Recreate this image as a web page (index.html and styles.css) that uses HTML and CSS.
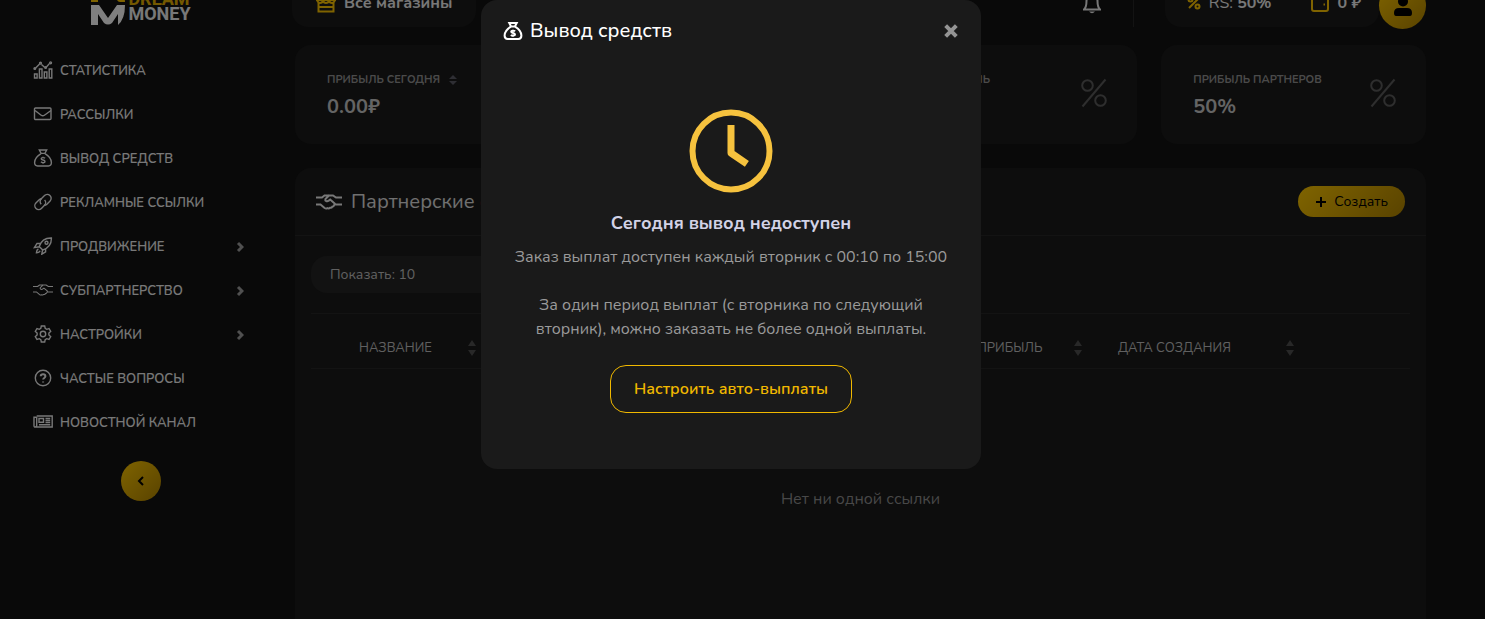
FILE: index.html
```html
<!DOCTYPE html>
<html lang="ru">
<head>
    <meta charset="UTF-8">
    <meta name="viewport" content="width=device-width, initial-scale=1.0">
    <title>Dream Money</title>
    <link rel="stylesheet" href="styles.css">
</head>
<body>

    <svg class="sprite" aria-hidden="true">
        <symbol id="i-stats" viewBox="0 0 20 18">
            <path d="M1.5 13h2.600v4H1.500zM6.400 8h2.600v9H6.400zM11.300 11h2.600v6h-2.600zM16.200 8h2.600v9h-2.600zM2.600 7l4-4M8.500 3.400l3.300 3M13.400 6l3.200-3.600" />
            <circle cx="1.800" cy="7.600" r=".8" /><circle cx="7.500" cy="2.200" r=".9" /><circle cx="12.600" cy="6.600" r=".8" /><circle cx="17.600" cy="1.800" r=".9" />
        </symbol>
        <symbol id="i-mail" viewBox="0 0 20 18">
            <rect x="1.500" y="3" width="16.500" height="11.500" rx="1" />
            <path d="M2 5.500l6.200 4.700q1.600 1.200 3.200 0L18 5.500" />
        </symbol>
        <symbol id="i-bag" viewBox="0 0 20 18">
            <path d="M6.300 1h7.400l-1.800 3.400H8.100zM8 4.600C4 7 1.600 10.400 1.600 13.600c0 2.300 1.200 3.400 3 3.400h10.800c1.800 0 3-1.100 3-3.400 0-3.200-2.400-6.600-6.400-9" />
            <path d="M12 9.300c-.7-.9-3.800-1-3.800.5 0 1.600 3.800.9 3.800 2.600 0 1.600-3.100 1.500-4 .4M10 7.700v1M10 13.500v1.200" />
        </symbol>
        <symbol id="i-link" viewBox="0 0 20 18">
            <path d="M8.200 11.200a3.800 3.800 0 0 1 .1-5.400l3.200-3.200a3.800 3.800 0 0 1 5.600 5.300l-3.200 3.300a3.800 3.800 0 0 1-3 1.100" />
            <path d="M11.600 6.900a3.800 3.800 0 0 1-.1 5.300l-3.100 3.200a3.800 3.800 0 0 1-5.500-5.300l3.300-3.300a3.800 3.800 0 0 1 2.600-1.100" />
        </symbol>
        <symbol id="i-rocket" viewBox="0 0 20 18">
            <path d="M6.200 9.500C8 4 12 .8 18.400 1c.2 6.300-3.200 10.200-8.600 12zM7.400 6.500H4L1.400 10.600l4.800-.8M12.600 11.700v3.200L8.800 17.200l.8-4.300M6.200 9.500l3.500 3.500M5.400 12c-1.400.6-1.900 2-2 3.700 1.800 0 3.200-.6 3.700-2" />
            <circle cx="13.500" cy="5.700" r="1.500" />
        </symbol>
        <symbol id="i-hands" viewBox="0 0 26 18">
            <path d="M0 4.500h6L8.500 2.500h4M0 11.500h4.500l4.100 3.500q1.400 1 2.800.2 1.500.7 2.600-.4 1.600.3 2.300-1.100 1.600-.1 2.200-2.200H26M26 4.500h-6L17 2.500h-4L9.400 6c-.7 2 1.700 3 3.400 1.600l1.400-1 5 4.300" />
        </symbol>
        <symbol id="i-gear" viewBox="0 0 20 18">
            <path d="M8.300 1h3.400l.5 2.400 1.500.9 2.300-.8 1.700 2.900-1.800 1.700v1.800l1.800 1.700-1.700 2.900-2.300-.8-1.500.9-.5 2.400H8.300l-.5-2.400-1.500-.9-2.300.8-1.700-2.900 1.800-1.700V8.100L2.300 6.400 4 3.500l2.300.8 1.500-.9z" />
            <circle cx="10" cy="9" r="2.700" />
        </symbol>
        <symbol id="i-help" viewBox="0 0 20 18">
            <circle cx="10" cy="9" r="7.700" />
            <path class="heavy" d="M7.700 7.200c.2-2.700 4.700-2.500 4.700.1 0 1.700-2.300 1.600-2.300 3.300M10.100 12.400v1.200" />
        </symbol>
        <symbol id="i-news" viewBox="0 0 20 18">
            <path d="M3.700 3h15.500v11H2.200Q1 14 1 12.800V4.300h2.700M3.700 4v8.500q0 1.500-1.500 1.500M6 5.500h4.500v3.800H6zM12.500 5.500h4.700M12.500 7.500h4.700M12.500 9.500h4.700M6 11.700h11.200" />
        </symbol>
        <symbol id="i-percent" viewBox="0 0 26 30">
            <circle cx="6.500" cy="7.500" r="5.300" /><circle cx="19.500" cy="22.500" r="5.300" />
            <path d="M24.500 1.500L1.500 28.500" />
        </symbol>
    </svg>

    <div class="page">
        <nav class="sidebar">
            <a class="logo" href="#">
                <svg class="logo-mark" viewBox="0 0 34 34" aria-hidden="true">
                    <path class="gold" d="M0 0h22q12 2 12 11h-5q-3 0-4-5H7v5H0z" />
                    <path class="white" d="M0 14h8l9 13 9-13h8q0 14-7 20V23l-6 9q-4 3-8 0l-6-9v11H0z" />
                </svg>
                <span class="logo-text"><span class="gold">DREAM</span><span>MONEY</span></span>
            </a>
            <ul class="menu">
                <li><a href="#"><svg class="icon"><use href="#i-stats" /></svg>Статистика</a></li>
                <li><a href="#"><svg class="icon"><use href="#i-mail" /></svg>Рассылки</a></li>
                <li><a href="#"><svg class="icon"><use href="#i-bag" /></svg>Вывод средств</a></li>
                <li><a href="#"><svg class="icon"><use href="#i-link" /></svg>Рекламные ссылки</a></li>
                <li><a href="#"><svg class="icon"><use href="#i-rocket" /></svg>Продвижение<svg class="arrow" viewBox="0 0 8 12"><path d="M2 2l4 4-4 4" /></svg></a></li>
                <li><a href="#"><svg class="icon"><use href="#i-hands" /></svg>Субпартнерство<svg class="arrow" viewBox="0 0 8 12"><path d="M2 2l4 4-4 4" /></svg></a></li>
                <li><a href="#"><svg class="icon"><use href="#i-gear" /></svg>Настройки<svg class="arrow" viewBox="0 0 8 12"><path d="M2 2l4 4-4 4" /></svg></a></li>
                <li><a href="#"><svg class="icon"><use href="#i-help" /></svg>Частые вопросы</a></li>
                <li><a href="#"><svg class="icon"><use href="#i-news" /></svg>Новостной канал</a></li>
            </ul>
            <button class="collapse" type="button" aria-label="Свернуть меню">
                <svg viewBox="0 0 8 12"><path d="M6 2L2 6l4 4" /></svg>
            </button>
        </nav>

        <main class="main">
            <header class="topbar">
                <button class="shops" type="button">
                    <svg viewBox="0 0 20 20"><path d="M3 1h14l2 6H1zM2.500 10v8.500h15V10M2.500 14h15M1 7q1 3 3 3t3-2q1 2 3 2t3-2q1 2 3 2t3-3" /></svg>
                    Все магазины
                </button>
                <button class="bell" type="button" aria-label="Уведомления">
                    <svg viewBox="0 0 18 22"><path d="M1 17.500h16c-2-2-2.500-4-2.500-8.500a5.500 5.500 0 0 0-11 0c0 4.500-.5 6.500-2.500 8.500z" /><path class="clapper" d="M6 19.500h6q-3 3.500-6 0z" /></svg>
                </button>
                <div class="balance">
                    <svg class="rate" viewBox="0 0 14 14"><circle cx="3.500" cy="3.500" r="2" /><circle cx="10.500" cy="10.500" r="2" /><path d="M12 2L2 12" /></svg>
                    <span>RS: <b>50%</b></span>
                    <svg class="wallet" viewBox="0 0 18 18"><path d="M14 4V1H3Q1 1 1 3v12q0 2 2 2h12q2 0 2-2V6q0-2-2-2H3M12.500 10.500h1.500" /></svg>
                    <b>0 ₽</b>
                </div>
                <button class="avatar" type="button" aria-label="Профиль">
                    <svg viewBox="0 0 18 20"><circle cx="9" cy="5.500" r="5" /><path d="M5 12h8q5 0 5 5 0 3-2 3H2q-2 0-2-3 0-5 5-5z" /></svg>
                </button>
            </header>

            <section class="cards">
                <div class="card">
                    <div>
                        <h3>Прибыль сегодня <svg class="updown" viewBox="0 0 8 10"><path d="M0 4l4-4 4 4zM0 6h8l-4 4z" /></svg></h3>
                        <p>0.00₽</p>
                    </div>
                </div>
                <div class="card"></div>
                <div class="card">
                    <div>
                        <h3>Моя прибыль</h3>
                    </div>
                    <svg class="percent"><use href="#i-percent" /></svg>
                </div>
                <div class="card">
                    <div>
                        <h3>Прибыль партнеров</h3>
                        <p>50%</p>
                    </div>
                    <svg class="percent"><use href="#i-percent" /></svg>
                </div>
            </section>

            <section class="panel">
                <div class="panel-head">
                    <svg class="icon"><use href="#i-hands" /></svg>
                    <h2>Партнерские <span class="accent">ссылки</span></h2>
                    <button class="create" type="button">
                        <svg viewBox="0 0 12 12"><path d="M6 1v10M1 6h10" /></svg>Создать
                    </button>
                </div>
                <div class="panel-body">
                    <select class="limit" aria-label="Показать">
                        <option>Показать: 10</option>
                    </select>
                    <table>
                        <thead>
                            <tr>
                                <th class="col-name"><span>Название <svg class="sort" viewBox="0 0 8 16"><path d="M0 6l4-6 4 6zM0 10h8l-4 6z" /></svg></span></th>
                                <td></td>
                                <th class="col-profit"><span>Прибыль <svg class="sort" viewBox="0 0 8 16"><path d="M0 6l4-6 4 6zM0 10h8l-4 6z" /></svg></span></th>
                                <th class="col-date"><span>Дата создания <svg class="sort" viewBox="0 0 8 16"><path d="M0 6l4-6 4 6zM0 10h8l-4 6z" /></svg></span></th>
                                <td class="col-actions"></td>
                            </tr>
                        </thead>
                        <tbody>
                            <tr>
                                <td class="empty" colspan="5">Нет ни одной ссылки</td>
                            </tr>
                        </tbody>
                    </table>
                </div>
            </section>
        </main>
    </div>

    <div class="overlay">
        <div class="modal" role="dialog" aria-modal="true" aria-labelledby="modal-title">
            <div class="modal-head">
                <svg class="icon"><use href="#i-bag" /></svg>
                <h2 id="modal-title">Вывод средств</h2>
                <button class="close" type="button" aria-label="Закрыть">
                    <svg viewBox="0 0 12 12"><path d="M2 2l8 8M10 2l-8 8" /></svg>
                </button>
            </div>
            <div class="modal-body">
                <svg class="clock" viewBox="0 0 84 84" aria-hidden="true">
                    <circle cx="42" cy="42" r="38.500" />
                    <path class="hands" d="M42 19.500v24.500l13 9" />
                </svg>
                <h3>Сегодня вывод недоступен</h3>
                <p>Заказ выплат доступен каждый вторник с 00:10 по 15:00</p>
                <p class="note">За один период выплат (с вторника по следующий вторник), можно заказать не более одной выплаты.</p>
                <a class="auto" href="#">Настроить авто-выплаты</a>
            </div>
        </div>
    </div>

</body>
</html>
```

FILE: styles.css
```css
* {
    box-sizing: border-box;
}

body {
    margin: 0;
    background-color: #121212;
    color: #f0f0f0;
    font-family: Nunito, Lato, "Noto Sans", sans-serif;
    font-size: 16px;
    line-height: 24px;
    overflow: hidden;
}

h2, h3, p, ul {
    margin: 0;
    padding: 0;
}

a {
    color: inherit;
    text-decoration: none;
}

button {
    font: inherit;
    color: inherit;
    background: none;
    border: none;
    padding: 0;
    cursor: pointer;
}

svg {
    fill: none;
    stroke: currentColor;
    flex: none;
}

.sprite {
    display: none;
}

.heavy {
    stroke-width: 2;
}

.page {
    display: flex;
    height: 100vh;
    padding-right: 23px;
    overflow: hidden;
}

/* sidebar */

.sidebar {
    width: 282px;
    flex: none;
    display: flex;
    flex-direction: column;
    align-items: center;
}

.logo {
    display: flex;
    align-items: flex-end;
    justify-content: center;
    gap: 3px;
    height: 25px;
    margin-bottom: 24px;
    font-family: Roboto, sans-serif;
    font-weight: 700;
    font-size: 18px;
}

.logo-mark {
    width: 34px;
    height: 34px;
    stroke: none;
}

.logo-mark .gold {
    fill: #ffc600;
}

.logo-mark .white {
    fill: #ffffff;
}

.logo-text {
    display: flex;
    flex-direction: column;
    line-height: 15px;
    padding-bottom: 4px;
}

.logo-text .gold {
    color: #e6b000;
}

.menu {
    width: 100%;
    list-style: none;
    margin-bottom: 16px;
}

.menu a {
    display: flex;
    align-items: center;
    gap: 7px;
    height: 44px;
    padding: 0 38px 0 33px;
    font-size: 13px;
    font-weight: 600;
    text-transform: uppercase;
}

.menu .icon {
    width: 20px;
    height: 18px;
    margin-bottom: 2px;
    overflow: visible;
    stroke-width: 1.4;
}

.menu .arrow {
    width: 8px;
    height: 12px;
    margin-left: auto;
    stroke: #a0a0a0;
    stroke-width: 3;
}

.collapse,
.avatar {
    display: flex;
    align-items: center;
    justify-content: center;
    border-radius: 50%;
    background: linear-gradient(135deg, #ffc800, #b38600);
    color: #000000;
}

.collapse {
    width: 40px;
    height: 40px;
}

.collapse svg {
    width: 8px;
    height: 12px;
    stroke-width: 2;
}

/* main column */

.main {
    flex: 1;
    min-width: 0;
    padding: 0 36px 0 13px;
}

.topbar {
    display: flex;
    align-items: flex-end;
    height: 27px;
    margin-left: -3px;
    margin-bottom: 18px;
}

.shops {
    display: flex;
    align-items: center;
    gap: 8px;
    height: 48px;
    padding: 0 24px;
    border-radius: 16px;
    background-color: #1a1a1a;
    font-weight: 700;
}

.shops svg {
    width: 20px;
    height: 20px;
    color: #ffc600;
    stroke-width: 2;
}

.bell {
    display: flex;
    align-items: center;
    height: 48px;
    margin-left: auto;
    padding: 0 32px;
    border-right: 1px solid #262626;
}

.bell svg {
    width: 18px;
    height: 22px;
    stroke-width: 2;
}

.bell .clapper {
    fill: currentColor;
    stroke: none;
}

.balance {
    display: flex;
    align-items: center;
    gap: 8px;
    height: 48px;
    margin-left: 31px;
    padding: 0 18px 0 22px;
    border-radius: 16px;
    background-color: #1a1a1a;
}

.balance svg {
    color: #ffc600;
    stroke-width: 2;
}

.balance .rate {
    width: 14px;
    height: 14px;
}

.balance .wallet {
    width: 18px;
    height: 18px;
    margin-left: 32px;
}

.avatar {
    width: 47px;
    height: 47px;
    margin-bottom: -2px;
}

.avatar svg {
    width: 18px;
    height: 20px;
    fill: currentColor;
    stroke: none;
}

.cards {
    display: grid;
    grid-template-columns: repeat(4, 1fr);
    gap: 24px;
    margin-bottom: 24px;
}

.card {
    display: flex;
    justify-content: space-between;
    align-items: center;
    height: 99px;
    padding: 0 30px 0 32px;
    border-radius: 16px;
    background-color: #1a1a1a;
}

.card > div {
    align-self: flex-start;
    padding-top: 23px;
}

.card h3 {
    color: #949494;
    font-size: 11px;
    font-weight: 700;
    text-transform: uppercase;
}

.card p {
    color: #c8c8c8;
    font-size: 20px;
    font-weight: 700;
    line-height: 30px;
}

.card .updown {
    width: 8px;
    height: 10px;
    margin-left: 6px;
    vertical-align: middle;
    fill: #5c5c66;
    stroke: none;
}

.card .percent {
    width: 26px;
    height: 30px;
    margin-bottom: 4px;
    color: #5c5c5c;
    stroke-width: 2;
}

.panel {
    min-height: 460px;
    border-radius: 16px;
    background-color: #1a1a1a;
}

.panel-head {
    display: flex;
    align-items: center;
    gap: 9px;
    height: 68px;
    padding: 0 21px;
    border-bottom: 1px solid #262626;
}

.panel-head .icon {
    width: 26px;
    height: 18px;
    stroke-width: 2;
}

.panel-head h2 {
    color: #e0e0e0;
    font-size: 20px;
    font-weight: 400;
}

.panel-head .accent {
    color: #e02020;
}

.create {
    display: flex;
    align-items: center;
    gap: 7px;
    height: 31px;
    margin-left: auto;
    padding: 0 17px;
    border-radius: 16px;
    background: linear-gradient(135deg, #ffc800, #b38600);
    color: #000000;
    font-size: 14px;
}

.create svg {
    width: 12px;
    height: 12px;
    stroke-width: 2;
}

.panel-body {
    padding: 20px 16px;
}

.limit {
    display: block;
    width: 200px;
    height: 37px;
    margin-bottom: 20px;
    padding: 0 19px;
    appearance: none;
    border: none;
    border-radius: 16px;
    background-color: #242424;
    color: #c0c0c0;
    font: inherit;
    font-size: 14px;
}

table {
    width: 100%;
    table-layout: fixed;
    border-collapse: collapse;
}

thead tr {
    height: 55px;
    border-top: 1px solid #262626;
    border-bottom: 1px solid #262626;
}

th {
    padding: 14px 6px 0 30px;
    color: #c0c0c0;
    font-size: 13px;
    font-weight: 400;
    text-transform: uppercase;
}

th span {
    display: flex;
    align-items: center;
    justify-content: space-between;
}

.col-name {
    width: 171px;
    padding-left: 48px;
}

.col-profit {
    width: 141px;
}

.col-date {
    width: 212px;
}

.col-actions {
    width: 110px;
}

.sort {
    width: 8px;
    height: 16px;
    fill: #505050;
    stroke: none;
}

.empty {
    padding: 118px 0;
    color: #909090;
    text-align: center;
}

/* modal */

.overlay {
    position: fixed;
    inset: 0;
    display: flex;
    align-items: flex-start;
    justify-content: center;
    padding-right: 23px;
    background-color: rgba(0, 0, 0, 0.5);
}

.modal {
    width: 500px;
    border-radius: 16px;
    background-color: #1a1a1a;
}

.modal-head {
    display: flex;
    align-items: center;
    gap: 7px;
    height: 61px;
    padding: 0 22px;
    color: #ffffff;
}

.modal-head .icon {
    width: 20px;
    height: 18px;
    stroke-width: 2;
}

.modal-head h2 {
    font-size: 20px;
    font-weight: 500;
}

.close {
    display: flex;
    margin-left: auto;
    color: #949494;
}

.close svg {
    width: 16px;
    height: 16px;
    stroke-width: 3;
}

.modal-body {
    display: flex;
    flex-direction: column;
    align-items: center;
    padding: 48px 32px 56px;
    color: #9a9a9a;
    text-align: center;
}

.clock {
    width: 84px;
    height: 84px;
    margin-bottom: 16px;
    color: #f6c23e;
    stroke-width: 6;
}

.clock .hands {
    stroke-width: 7;
    stroke-linecap: square;
    stroke-linejoin: round;
}

.modal-body h3 {
    margin-bottom: 8px;
    color: #d2d2e6;
    font-size: 18px;
    line-height: 28px;
}

.note {
    margin: 24px 0;
}

.auto {
    padding: 11px 23px;
    border: 1px solid #f0b800;
    border-radius: 16px;
    color: #f0b800;
    font-weight: 600;
}
```
